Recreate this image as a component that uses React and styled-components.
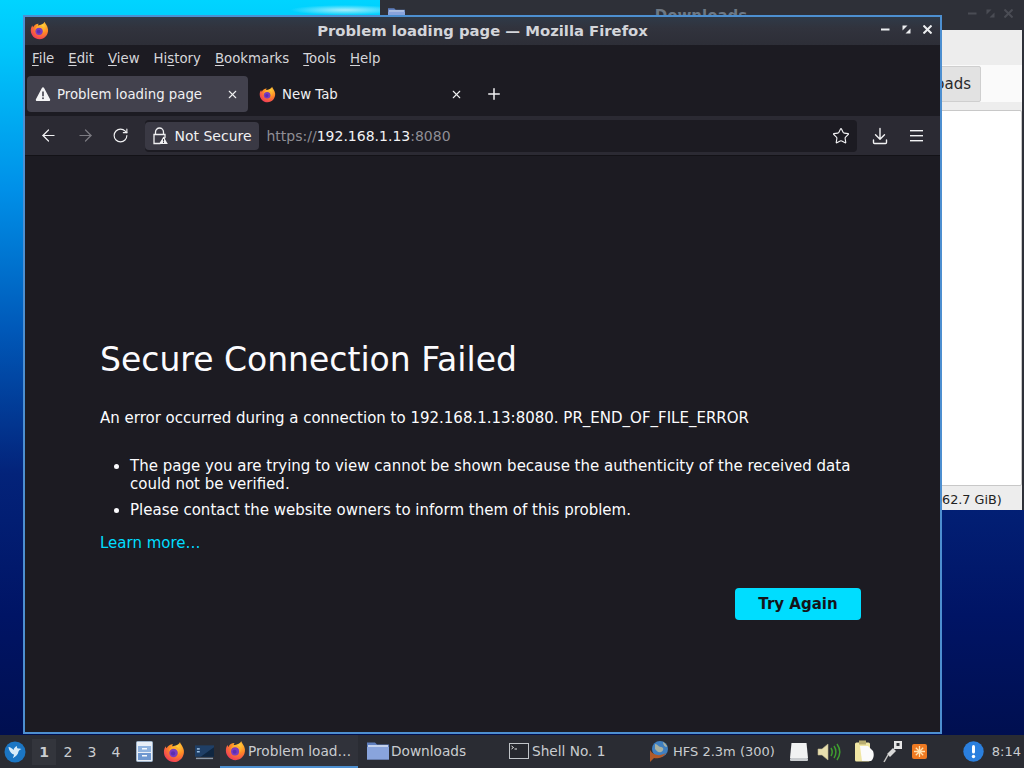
import React from "react";
import styled, { createGlobalStyle } from "styled-components";
import { ArrowLeft, ArrowRight, RotateCw, Star, X, Plus } from "lucide-react";

const GlobalStyle = createGlobalStyle`
  html, body {
    margin: 0;
    padding: 0;
    width: 1024px;
    height: 768px;
    overflow: hidden;
    font-family: "DejaVu Sans", sans-serif;
  }
  * { box-sizing: border-box; }
`;

const Screen = styled.div`
  width: 1024px;
  height: 768px;
  display: flex;
  flex-direction: column;
`;

const Desktop = styled.div`
  position: relative;
  flex: 1;
  overflow: hidden;
  background:
    radial-gradient(ellipse 55px 5px at 345px 10px, #a6ecfb 0%, transparent 100%),
    linear-gradient(180deg, #00d4ff 0px, #00c6fb 47px, #0090e8 189px, #0058b8 331px, #03237a 473px, #001465 615px, #000f50 735px);
`;

/* window behind */
const BackWindow = styled.div`
  position: absolute;
  left: 380px;
  top: -2px;
  width: 644px;
  height: 512px;
  display: flex;
  flex-direction: column;
  background: #ededed;
  border-right: 2px solid #2e3038;
`;

const BackTitle = styled.div`
  position: relative;
  height: 32px;
  flex: none;
  background: #2e3038;
  color: #6d7884;
  font-weight: bold;
  font-size: 15px;
  display: flex;
  justify-content: center;
  padding-top: 9px;
`;

const BackFolder = styled.span`
  position: absolute;
  left: 8px;
  top: 9px;
  display: flex;
`;

const BackCtl = styled.div`
  position: absolute;
  right: 9px;
  top: 11px;
  display: flex;
  gap: 9px;
  color: #4a4c54;
`;

const BackBody = styled.div`
  flex: 1;
  display: flex;
  flex-direction: column;
`;

const BackBtnRow = styled.div`
  height: 80px;
  flex: none;
  display: flex;
  justify-content: flex-end;
  align-items: flex-end;
  padding: 0 41px 8px 0;
  background: linear-gradient(180deg, #ededed 35px, #fafafa 35px, #fafafa 72px, #ededed 72px);
`;

const BackBtn = styled.div`
  width: 120px;
  height: 36px;
  background: #e2e2e2;
  border: 1px solid #cfcfcf;
  border-radius: 2px;
  font-size: 15px;
  line-height: 35px;
  color: #2a2a2a;
  text-align: right;
  padding-right: 9px;
`;

const BackList = styled.div`
  flex: 1;
  background: #fff;
  border: 1px solid #c8c8c8;
  border-radius: 2px;
`;

const BackStatus = styled.div`
  height: 24px;
  flex: none;
  font-size: 12.8px;
  line-height: 27px;
  color: #222;
  padding-left: 562px;
`;

/* firefox window */
const FoxWindow = styled.div`
  position: absolute;
  left: 23px;
  top: 15px;
  width: 919px;
  height: 719px;
  border: 2px solid #4d8fd0;
  display: flex;
  flex-direction: column;
  background: #1c1b22;
`;

const TitleBar = styled.div`
  position: relative;
  height: 28px;
  flex: none;
  padding-bottom: 2px;
  background: linear-gradient(180deg, #2f3a48 0%, #31333d 40%, #2d2e37 100%);
  display: flex;
  align-items: center;
  justify-content: center;
  color: #d3d5da;
  font-weight: bold;
  font-size: 14.8px;
`;

const TitleIcon = styled.span`
  position: absolute;
  left: 5px;
  top: 4px;
  display: flex;
`;

const WinCtl = styled.div`
  position: absolute;
  right: 8px;
  top: 8px;
  display: flex;
  align-items: center;
  gap: 12px;
  color: #eceef0;
`;

const MenuBar = styled.div`
  height: 28px;
  flex: none;
  display: flex;
  align-items: center;
  gap: 14px;
  padding: 0 0 2px 7px;
  color: #d6d6da;
  font-size: 13.3px;
  background: #1c1b22;
`;

const MenuItem = styled.span`
  u { text-underline-offset: 2px; }
`;

const TabBar = styled.div`
  height: 43px;
  flex: none;
  display: flex;
  align-items: center;
  padding: 0 0 1px 2px;
  background: #1c1b22;
`;

const Tab = styled.div`
  width: 221px;
  height: 36px;
  border-radius: 4px;
  display: flex;
  align-items: center;
  gap: 6px;
  padding: 0 9px 0 8px;
  font-size: 13.3px;
  color: #f0f0f2;
  background: ${(p) => (p.$active ? "#42414d" : "transparent")};
  margin-right: ${(p) => (p.$active ? "3px" : "0")};
`;

const TabLabel = styled.span`
  flex: 1;
  white-space: nowrap;
`;

const NewTab = styled.div`
  display: flex;
  margin-left: 13px;
  color: #f0f0f2;
`;

const NavBar = styled.div`
  height: 40px;
  flex: none;
  display: flex;
  align-items: center;
  background: #2b2a33;
  padding: 0 17px 0 14px;
  color: #f2f2f4;
  border-bottom: 1px solid #131217;
`;

const NavBtn = styled.span`
  display: flex;
  width: 36.500px;
  flex: none;
  color: ${(p) => (p.$off ? "#7c7b82" : "#f2f2f4")};
`;

const UrlBar = styled.div`
  flex: 1;
  height: 32px;
  margin-right: 15px;
  margin-left: -4px;
  border-radius: 4px;
  background: #1c1b22;
  display: flex;
  align-items: center;
  padding: 0 7px 0 0;
`;

const SecureChip = styled.div`
  height: 28px;
  width: 114px;
  flex: none;
  padding-left: 7px;
  border-radius: 4px;
  background: #3a3944;
  display: flex;
  align-items: center;
  gap: 7px;
  font-size: 14px;
  white-space: nowrap;
  color: #f0f0f2;
`;

const UrlText = styled.div`
  flex: 1;
  padding-left: 8px;
  font-size: 14px;
  color: #8f8e95;
  b { font-weight: normal; color: #f2f2f4; }
`;

const RightTools = styled.div`
  display: flex;
  align-items: center;
  gap: 22px;
`;

const Page = styled.main`
  flex: 1;
  padding: 184px 79px 0 75px;
  color: #fbfbfe;
  background: #1c1b22;
`;

const Heading = styled.h1`
  margin: 0;
  font-weight: normal;
  font-size: 33px;
  line-height: 40px;
`;

const Lead = styled.p`
  margin: 29px 0 0;
  font-size: 15px;
  line-height: 18px;
`;

const Points = styled.ul`
  margin: 30px 0 0;
  padding: 0 0 0 30px;
  list-style: disc;
`;

const Point = styled.li`
  font-size: 15px;
  line-height: 18px;
  margin-bottom: 8px;
`;

const LearnMore = styled.a`
  display: block;
  margin-top: 15px;
  color: #00ddff;
  font-size: 15px;
  line-height: 18px;
`;

const ActionRow = styled.div`
  display: flex;
  justify-content: flex-end;
  margin-top: 36px;
`;

const TryAgain = styled.button`
  width: 126px;
  height: 32px;
  border: none;
  border-radius: 4px;
  background: #00ddff;
  color: #15141a;
  font-family: inherit;
  font-weight: bold;
  font-size: 15px;
`;

/* taskbar */
const Taskbar = styled.footer`
  height: 33px;
  flex: none;
  background: #2a2c33;
  display: flex;
  align-items: center;
  padding: 0 0 0 4px;
  color: #c9ccd0;
  font-size: 13.700px;
`;

const Desk = styled.span`
  width: 24px;
  height: 26px;
  display: flex;
  align-items: center;
  justify-content: center;
  font-size: 14px;
  font-weight: ${(p) => (p.$on ? "bold" : "normal")};
  background: ${(p) => (p.$on ? "#33353c" : "transparent")};
`;

const DeskGroup = styled.div`
  display: flex;
  margin: 0 4px 0 6px;
`;

const Launchers = styled.div`
  display: flex;
  align-items: center;
  width: 88px;
  flex: none;
  padding-left: 4px;
  gap: 10px;
`;

const TaskItem = styled.div`
  width: ${(p) => p.$w}px;
  height: 33px;
  flex: none;
  display: flex;
  align-items: center;
  gap: ${(p) => p.$gap}px;
  padding-left: ${(p) => p.$pad}px;
  white-space: nowrap;
  border-bottom: 2px solid ${(p) => (p.$on ? "#4d8fd0" : "transparent")};
  background: ${(p) => (p.$on ? "#30323a" : "transparent")};
`;

const Tray = styled.div`
  flex: 1;
  display: flex;
  align-items: center;
  padding-left: 9px;
`;

const TrayLabel = styled.span`
  font-size: 13px;
  margin: 0 14px 0 3px;
  white-space: nowrap;
`;

const TrayGap = styled.span`
  width: ${(p) => p.$w}px;
  flex: none;
`;

const Clock = styled.span`
  font-size: 13px;
  margin-left: 8px;
`;

const FoxLogo = ({ size = 20, id }) => (
  <svg width={size} height={size} viewBox="0 0 24 24">
    <defs>
      <radialGradient id={id} cx="68%" cy="22%" r="90%">
        <stop offset="0" stopColor="#ffd23a" />
        <stop offset="0.45" stopColor="#ff8a25" />
        <stop offset="1" stopColor="#ee2f60" />
      </radialGradient>
    </defs>
    <path
      d="M18.500 1c.4 2.400 3.800 4.800 4.300 9.600.6 6.600-4.300 12.400-10.800 12.400C5.900 23 1 18 1 12c0-2.600.8-4.700 2-6.200.1 1 .5 1.700 1 2.200C5 5.400 7.500 3.500 11 3.500c-.7.8-1 1.700-1 2.300 3.500-.6 7.500-1.800 8.500-4.800z"
      fill={`url(#${id})`}
    />
    <circle cx="11.500" cy="13" r="4.600" fill="#7a3cc0" />
    <circle cx="11" cy="13.500" r="2.300" fill="#5b2fb0" />
    <path d="M6.500 11.500c1-3 4.500-4.500 7.500-3.200 2.500 1.100 3.500 3.600 2.800 6.200 1.200-1 1.700-4.700-.4-6.800-3-3-8.900-2-9.900 3.800z" fill="#ffb02e" />
  </svg>
);

const WarnIcon = () => (
  <svg width="16" height="16" viewBox="0 0 16 16">
    <path d="M8 1.200c.5 0 .9.300 1.100.7l6 11.300c.4.800-.2 1.800-1.100 1.800H2c-.9 0-1.500-1-1.100-1.800l6-11.300c.2-.4.600-.7 1.100-.7z" fill="#f4f4f6" />
    <rect x="7.200" y="5.500" width="1.600" height="4.800" fill="#42414d" />
    <rect x="7.200" y="11.400" width="1.600" height="1.700" fill="#42414d" />
  </svg>
);

const InsecureLock = () => (
  <svg width="16" height="18" viewBox="0 0 16 18">
    <path d="M3.500 7.500V5a4 4 0 0 1 8 0v2.500" fill="none" stroke="#f0f0f2" strokeWidth="1.300" />
    <path d="M2 7.500h11v3l-5 6H2z" fill="none" stroke="#f0f0f2" strokeWidth="1.300" />
    <path d="M11.500 9.500l4.300 7.500H7.200z" fill="#f0f0f2" />
    <rect x="11" y="12" width="1" height="2.500" fill="#3a3944" />
    <rect x="11" y="15" width="1" height="1" fill="#3a3944" />
  </svg>
);

const DownloadIcon = () => (
  <svg width="16" height="18" viewBox="0 0 16 18" fill="none" stroke="#f2f2f4" strokeWidth="1.400" strokeLinecap="round" strokeLinejoin="round">
    <path d="M8 1.500v10.500M3.500 7.800L8 12.300l4.500-4.500" />
    <path d="M1.500 13v2.500a1 1 0 0 0 1 1h11a1 1 0 0 0 1-1V13" />
  </svg>
);

const HamburgerIcon = () => (
  <svg width="13" height="12" viewBox="0 0 13 12" fill="#f2f2f4">
    <rect x="0" y="0" width="13" height="1.400" />
    <rect x="0" y="5" width="13" height="1.400" />
    <rect x="0" y="10" width="13" height="1.400" />
  </svg>
);

const MinimizeIcon = () => (
  <svg width="9" height="9" viewBox="0 0 9 9" fill="currentColor">
    <rect x="0" y="3.500" width="8.500" height="2" />
  </svg>
);

const MaximizeIcon = () => (
  <svg width="9" height="9" viewBox="0 0 9 9" fill="currentColor">
    <path d="M0.500 0.500h5l-5 5z" />
    <path d="M8.500 8.500h-5l5-5z" />
  </svg>
);

const CloseIcon = () => (
  <svg width="9" height="9" viewBox="0 0 9 9" fill="none" stroke="currentColor" strokeWidth="2">
    <path d="M0.500 0.500l8 8M8.500 0.500l-8 8" />
  </svg>
);

const MenuLabel = ({ u, rest, pre }) => (
  <MenuItem>
    {pre}
    <u>{u}</u>
    {rest}
  </MenuItem>
);

const DistroIcon = () => (
  <svg width="22" height="22" viewBox="0 0 22 22">
    <circle cx="11" cy="11" r="10.500" fill="#1b76c4" />
    <path d="M4.500 6c2 .3 3.500 1.200 5 3 .5-2 2-3.500 3.500-4-.3 1.200 0 2 .8 2.600 1.400-.4 2.500-.2 3.700.4-1.500.5-2.500 1.200-3 2.500-.5 3-2.800 5.500-6 6.500 1-1.300 1.500-2.400 1.500-3.500C7.500 13 5 10 4.500 6z" fill="#d8ecfa" />
  </svg>
);

const CabinetIcon = () => (
  <svg width="17" height="21" viewBox="0 0 17 21">
    <rect x="0.500" y="0.500" width="16" height="20" rx="1" fill="#e8eef6" stroke="#9fb4cc" />
    <rect x="2" y="5" width="13" height="6" fill="#8fb2de" />
    <rect x="2" y="12" width="13" height="7" fill="#6f98d0" />
    <rect x="6" y="7" width="5" height="1.500" fill="#f4f8fc" />
    <rect x="6" y="14" width="5" height="1.500" fill="#f4f8fc" />
  </svg>
);

const ScreenIcon = () => (
  <svg width="19" height="16" viewBox="0 0 20 16">
    <rect x="0" y="1" width="20" height="12" fill="#1f3f66" />
    <path d="M6 13L20 3v10z" fill="#0f2640" />
    <rect x="2" y="4" width="3" height="1.500" fill="#9fc4e8" />
    <rect x="2" y="7" width="3" height="1.500" fill="#9fc4e8" />
    <rect x="1" y="14" width="18" height="1.500" fill="#8a97a6" />
  </svg>
);

const FolderIcon = ({ w = 22, h = 19 }) => (
  <svg width={w} height={h} viewBox="0 0 22 19">
    <path d="M0 1.500h8l2 2h12v15H0z" fill="#5f7fbe" />
    <rect x="1" y="4" width="20" height="2" fill="#c4d2ec" />
    <rect x="0" y="6" width="22" height="12.500" fill="#89a4dc" />
  </svg>
);

const TerminalIcon = () => (
  <svg width="20" height="16" viewBox="0 0 20 16">
    <rect x="0.500" y="0.500" width="19" height="15" fill="#26282e" stroke="#c0c4c8" />
    <path d="M2.500 3l2 1.500-2 1.500M5.500 6H8" stroke="#e4e4e4" fill="none" />
  </svg>
);

const GlobeIcon = () => (
  <svg width="22" height="23" viewBox="0 0 22 23">
    <circle cx="12" cy="9" r="8" fill="#3f7fc0" />
    <path d="M7 4c3 0 3 3 6 3s3 4 0 5-4-1-6-3zM15 2c2 1 4 3 4 5-2 0-4-2-4-5z" fill="#a8b0a0" />
    <path d="M2 10c3 5 9 7 16 3-3 5-9 6-12 5l-4 4c0-4 0-8 0-12z" fill="#b05a28" />
  </svg>
);

const DriveIcon = () => (
  <svg width="20" height="20" viewBox="0 0 20 20">
    <path d="M2.500 1h15L19 16H1z" fill="#f1f2f2" />
    <rect x="1" y="16" width="18" height="3" rx="1" fill="#c9cccf" />
  </svg>
);

const SpeakerIcon = () => (
  <svg width="24" height="20" viewBox="0 0 24 20">
    <path d="M1 7h4l6-5v16l-6-5H1z" fill="#e8dfae" stroke="#b9b28c" strokeWidth=".6" />
    <path d="M14 6c1.500 2.500 1.500 5.500 0 8M17 4c2.500 3.500 2.500 8.500 0 12M20 2c3.500 5 3.500 11 0 16" fill="none" stroke="#3f9e2f" strokeWidth="1.500" />
  </svg>
);

const ClipboardIcon = () => (
  <svg width="21" height="23" viewBox="0 0 21 23">
    <rect x="1" y="2.500" width="15" height="19" rx="1.500" fill="#f0e6a4" />
    <rect x="5" y="0.500" width="7" height="4" fill="#b8ad70" />
    <path d="M6 6h8l5 5c1.500 4 .5 8-2 10H8z" fill="#fbfbfb" />
  </svg>
);

const PlugIcon = () => (
  <svg width="21" height="23" viewBox="0 0 21 23">
    <rect x="12" y="1" width="8" height="8" fill="#e6e6e6" />
    <rect x="14.500" y="3" width="3" height="3" fill="#33353a" />
    <path d="M11 8l3 3-6 6-3-3z" fill="#d8d8d8" />
    <path d="M6 15l-4 7" stroke="#c4c4c4" strokeWidth="1.500" />
  </svg>
);

const UpdateIcon = () => (
  <svg width="15" height="15" viewBox="0 0 15 15">
    <rect width="15" height="15" rx="2" fill="#ee7a22" />
    <path d="M7.500 2v11M2 7.500h11M3.800 3.800l7.400 7.400M11.200 3.800l-7.400 7.400" stroke="#ffe2b0" strokeWidth="1.300" />
  </svg>
);

const NoticeIcon = () => (
  <svg width="21" height="21" viewBox="0 0 21 21">
    <circle cx="10.500" cy="10.500" r="10.200" fill="#2a7fde" />
    <rect x="9" y="4" width="3" height="8.500" rx="1.500" fill="#fff" />
    <circle cx="10.500" cy="15.500" r="1.700" fill="#fff" />
  </svg>
);

export default function App() {
  return (
    <Screen>
      <GlobalStyle />
      <Desktop>
        <BackWindow>
          <BackTitle>
            <BackFolder>
              <FolderIcon w={17} h={15} />
            </BackFolder>
            Downloads
            <BackCtl>
              <MinimizeIcon />
              <MaximizeIcon />
              <CloseIcon />
            </BackCtl>
          </BackTitle>
          <BackBody>
            <BackBtnRow>
              <BackBtn>Downloads</BackBtn>
            </BackBtnRow>
            <BackList />
            <BackStatus>62.7 GiB)</BackStatus>
          </BackBody>
        </BackWindow>

        <FoxWindow>
          <TitleBar>
            <TitleIcon>
              <FoxLogo id="fx-title" size={19} />
            </TitleIcon>
            Problem loading page — Mozilla Firefox
            <WinCtl>
              <MinimizeIcon />
              <MaximizeIcon />
              <CloseIcon />
            </WinCtl>
          </TitleBar>
          <MenuBar>
            <MenuLabel u="F" rest="ile" />
            <MenuLabel u="E" rest="dit" />
            <MenuLabel u="V" rest="iew" />
            <MenuLabel pre="Hi" u="s" rest="tory" />
            <MenuLabel u="B" rest="ookmarks" />
            <MenuLabel u="T" rest="ools" />
            <MenuLabel u="H" rest="elp" />
          </MenuBar>
          <TabBar>
            <Tab $active>
              <WarnIcon />
              <TabLabel>Problem loading page</TabLabel>
              <X size={13} />
            </Tab>
            <Tab>
              <FoxLogo id="fx-tab" size={17} />
              <TabLabel>New Tab</TabLabel>
              <X size={13} />
            </Tab>
            <NewTab>
              <Plus size={18} />
            </NewTab>
          </TabBar>
          <NavBar>
            <NavBtn>
              <ArrowLeft size={19} strokeWidth={1.5} />
            </NavBtn>
            <NavBtn $off>
              <ArrowRight size={19} strokeWidth={1.5} />
            </NavBtn>
            <NavBtn>
              <RotateCw size={17} strokeWidth={1.6} />
            </NavBtn>
            <UrlBar>
              <SecureChip>
                <InsecureLock />
                Not Secure
              </SecureChip>
              <UrlText>
                https://<b>192.168.1.13</b>:8080
              </UrlText>
              <Star size={18} strokeWidth={1.5} />
            </UrlBar>
            <RightTools>
              <DownloadIcon />
              <HamburgerIcon />
            </RightTools>
          </NavBar>
          <Page>
            <Heading>Secure Connection Failed</Heading>
            <Lead>An error occurred during a connection to 192.168.1.13:8080. PR_END_OF_FILE_ERROR</Lead>
            <Points>
              <Point>The page you are trying to view cannot be shown because the authenticity of the received data could not be verified.</Point>
              <Point>Please contact the website owners to inform them of this problem.</Point>
            </Points>
            <LearnMore>Learn more…</LearnMore>
            <ActionRow>
              <TryAgain>Try Again</TryAgain>
            </ActionRow>
          </Page>
        </FoxWindow>
      </Desktop>
      <Taskbar>
        <DistroIcon />
        <DeskGroup>
          <Desk $on>1</Desk>
          <Desk>2</Desk>
          <Desk>3</Desk>
          <Desk>4</Desk>
        </DeskGroup>
        <Launchers>
          <CabinetIcon />
          <FoxLogo id="fx-launch" size={22} />
          <ScreenIcon />
        </Launchers>
        <TaskItem $w={138} $pad={5} $gap={2} $on>
          <FoxLogo id="fx-task" size={21} />
          Problem load…
        </TaskItem>
        <TaskItem $w={143} $pad={9} $gap={2}>
          <FolderIcon />
          Downloads
        </TaskItem>
        <TaskItem $w={138} $pad={8} $gap={3}>
          <TerminalIcon />
          Shell No. 1
        </TaskItem>
        <Tray>
          <GlobeIcon />
          <TrayLabel>HFS 2.3m (300)</TrayLabel>
          <DriveIcon />
          <TrayGap $w={8} />
          <SpeakerIcon />
          <TrayGap $w={13} />
          <ClipboardIcon />
          <TrayGap $w={7} />
          <PlugIcon />
          <TrayGap $w={9} />
          <UpdateIcon />
          <TrayGap $w={36} />
          <NoticeIcon />
          <Clock>8:14</Clock>
        </Tray>
      </Taskbar>
    </Screen>
  );
}
